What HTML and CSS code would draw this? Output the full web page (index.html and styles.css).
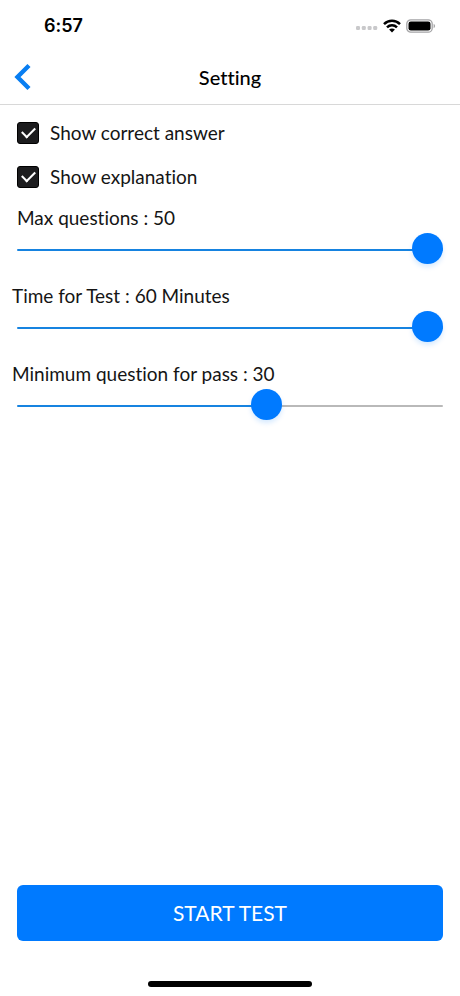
FILE: index.html
```html
<!DOCTYPE html>
<html lang="en">
<head>
<meta charset="utf-8">
<meta name="viewport" content="width=device-width, initial-scale=1">
<title>Setting</title>
<link rel="stylesheet" href="styles.css">
</head>
<body>
<div class="status">
  <span class="clock">6:57</span>
  <span class="indicators">
    <svg class="signal" width="22" height="8" viewBox="0 0 22 8" fill="#c9c9cb" aria-hidden="true"><rect x="0" y="4" width="4" height="4" rx="1.2"/><rect x="5.8" y="4" width="4" height="4" rx="1.2"/><rect x="11.6" y="4" width="4" height="4" rx="1.2"/><rect x="17.2" y="4" width="4" height="4" rx="1.2"/></svg>
    <svg class="wifi" width="18" height="14" viewBox="0 0 18 14" fill="none" stroke="#000" stroke-width="2.5" aria-hidden="true"><path d="M1 5.1C5.5.7 12.5.7 17 5.1"/><path d="M4 8.3c2.8-2.7 7.200-2.700 10 0"/><path d="M9 13.400l-2.900-2.900c1.600-1.500 4.200-1.500 5.800 0z" fill="#000" stroke="none"/></svg>
    <svg class="battery" width="30" height="14" viewBox="0 0 30 14" aria-hidden="true"><rect x=".8" y=".8" width="25.400" height="12.400" rx="4" fill="none" stroke="#a4a4a6" stroke-width="1.300"/><rect x="2.500" y="2.500" width="22" height="9" rx="2.300"/><path d="M27.600 4.800c2 .8 2 3.600 0 4.400z" fill="#a4a4a6"/></svg>
  </span>
</div>
<header class="header">
  <button class="back" type="button" aria-label="Back"><svg width="18" height="28" viewBox="0 0 18 28" fill="none" stroke="#087ef2" stroke-width="4.400" aria-hidden="true"><path d="M15 2.500L3.500 14 15 25.500"/></svg></button>
  <h1 class="title">Setting</h1>
</header>
<main class="settings">
  <label class="check"><input type="checkbox" checked><span>Show correct answer</span></label>
  <label class="check"><input type="checkbox" checked><span>Show explanation</span></label>
  <div class="field field-inset">
    <label for="max">Max questions : 50</label>
    <input id="max" class="slider" type="range" min="1" max="50" value="50">
  </div>
  <div class="field">
    <label for="time">Time for Test : 60 Minutes</label>
    <input id="time" class="slider" type="range" min="1" max="60" value="60">
  </div>
  <div class="field">
    <label for="pass">Minimum question for pass : 30</label>
    <input id="pass" class="slider" type="range" min="1" max="50" value="30" style="--fill: 59%">
  </div>
</main>
<footer class="footer">
  <button class="start" type="button">START TEST</button>
  <div class="home"></div>
</footer>
</body>
</html>
```
FILE: styles.css
```css
* {
  box-sizing: border-box;
}

body {
  margin: 0;
  min-height: 100vh;
  display: flex;
  flex-direction: column;
  background: #fff;
  color: #151515;
  font-family: Lato, "Open Sans", sans-serif;
  font-size: 19px;
  line-height: 22px;
  font-variant-ligatures: none;
}

.status {
  height: 50px;
  padding: 2px 24px 0 44px;
  display: flex;
  align-items: center;
  justify-content: space-between;
}

.clock {
  font-family: Inter, sans-serif;
  font-size: 18px;
  font-weight: 600;
  color: #000;
}

.indicators {
  display: flex;
  align-items: center;
  gap: 5px;
}

.header {
  height: 55px;
  padding: 0 14px;
  display: grid;
  grid-template-columns: 32px 1fr 32px;
  align-items: center;
  border-bottom: 1px solid #d8d8d8;
}

.back {
  display: flex;
  padding: 0;
  border: 0;
  background: none;
}

.title {
  margin: 0;
  font-size: 20px;
  font-weight: 500;
  text-align: center;
  color: #000;
}

.settings {
  flex: 1;
  padding: 16px 17px;
}

.check {
  display: flex;
  align-items: center;
  gap: 11px;
  height: 24px;
  margin-bottom: 20px;
}

.check input {
  appearance: none;
  display: grid;
  place-items: center;
  width: 22px;
  height: 22px;
  margin: 0;
  border: 1px solid #000;
  border-radius: 3px;
  background: #1c1c1e;
}

.check input:checked::before {
  content: "";
  width: 11px;
  height: 6px;
  margin-bottom: 4px;
  border: solid #fff;
  border-width: 0 0 2px 2px;
  transform: rotate(-45deg);
}

.field {
  margin-bottom: 19px;
}

.field label {
  display: block;
  margin: 0 0 5px -5px;
}

.field-inset {
  margin-top: -2px;
}

.field-inset label {
  margin-left: 0;
}

.slider {
  --fill: 100%;
  appearance: none;
  display: block;
  width: 100%;
  height: 32px;
  margin: 0;
  background: none;
}

.slider::-webkit-slider-runnable-track {
  height: 2px;
  border-radius: 1px;
  background: linear-gradient(to right, #1683e0 var(--fill), #b9b9b9 var(--fill));
}

.slider::-webkit-slider-thumb {
  appearance: none;
  width: 31px;
  height: 31px;
  margin-top: -16px;
  border-radius: 50%;
  background: #007aff;
  box-shadow: 0 3px 5px rgba(0, 122, 255, 0.16);
}

.footer {
  padding: 0 17px 9px;
}

.start {
  display: block;
  width: 100%;
  height: 56px;
  padding: 0 0 2px;
  border: 0;
  border-radius: 6px;
  background: #007aff;
  color: #fff;
  font-family: inherit;
  font-size: 21px;
  font-weight: 400;
}

.home {
  width: 164px;
  height: 6px;
  margin: 40px auto 0;
  border-radius: 3px;
  background: #000;
}
```
